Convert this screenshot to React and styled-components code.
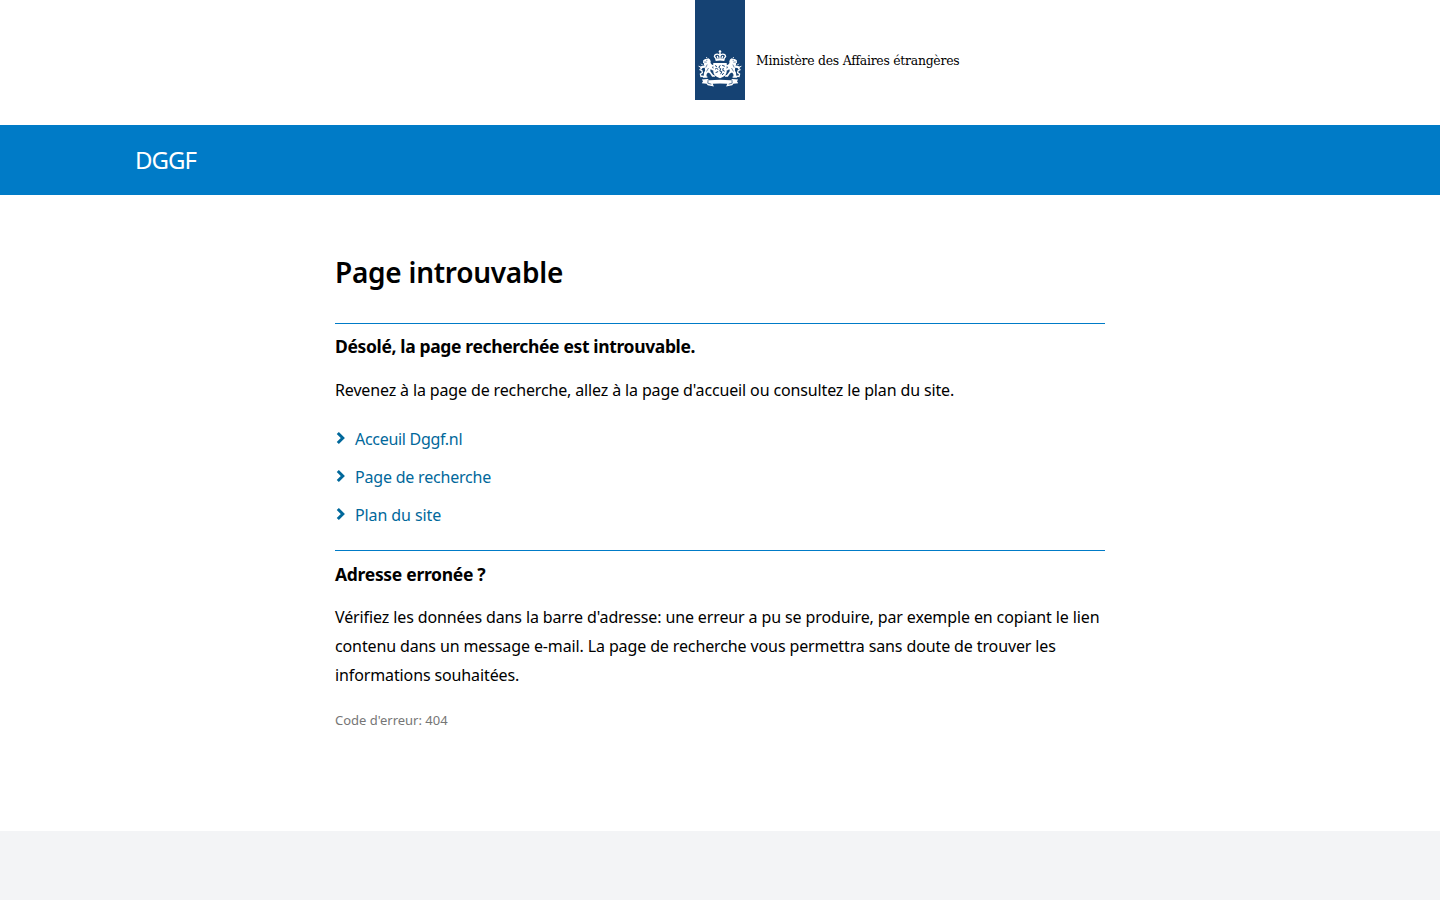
import React from "react";
import styled, { createGlobalStyle } from "styled-components";

const GlobalStyle = createGlobalStyle`
  * { box-sizing: border-box; }
  body {
    margin: 0;
    background: #fff;
    color: #000;
    font: 16px/29px "Noto Sans", "Open Sans", sans-serif;
    font-feature-settings: "liga" 1;
  }
`;

const Page = styled.div`
  min-height: 100vh;
  display: flex;
  flex-direction: column;
`;

const Header = styled.header`
  height: 125px;
  display: flex;
  padding-left: calc(50% - 25px);
`;

const Ribbon = styled.div`
  width: 50px;
  height: 100px;
  padding: 49px 3px 0;
  background: #154273;
`;

const Ministry = styled.span`
  margin: 46px 0 0 11px;
  font: 13.8px/29px "DejaVu Serif Condensed", "DejaVu Serif", serif;
  letter-spacing: -0.25px;
  white-space: nowrap;
`;

const TitleBar = styled.div`
  height: 70px;
  padding-left: 135px;
  background: #007bc7;
  color: #fff;
  font-size: 24px;
  line-height: 70px;
  letter-spacing: -1px;
`;

const Main = styled.main`
  width: 770px;
  height: 636px;
  margin: 0 auto;
  padding-top: 57px;
`;

const Title = styled.h1`
  margin: 0 0 31px;
  font-size: 28px;
  line-height: 40px;
  font-weight: 600;
  letter-spacing: -0.26px;
`;

const Section = styled.section`
  border-top: 1px solid #007bc7;
  padding-top: ${(p) => p.$gap};
`;

const Subtitle = styled.h2`
  margin: 0 0 ${(p) => p.$after};
  font-size: 17.5px;
  line-height: 28px;
  font-weight: 700;
  letter-spacing: ${(p) => p.$tracking};
`;

const Text = styled.p`
  margin: 0;
  letter-spacing: ${(p) => p.$tracking};
`;

const Links = styled.ul`
  list-style: none;
  margin: 20px 0 21px;
  padding: 0;
  display: grid;
  gap: 10px;
`;

const LinkItem = styled.li`
  display: flex;
  align-items: center;
  height: 28px;
`;

const Link = styled.a`
  color: #01689b;
  text-decoration: none;
  line-height: 28px;
  letter-spacing: ${(p) => p.$tracking};
`;

const Chevron = styled.svg`
  width: 20px;
  height: 14px;
  margin-top: -2px;
  fill: none;
  stroke: #01689b;
  stroke-width: 3;
`;

const ErrorCode = styled.p`
  margin: 20px 0 0;
  color: #767676;
  font-size: 13px;
  line-height: 20px;
`;

const Footer = styled.footer`
  flex: 1;
  background: #f3f4f6;
`;

const EmblemSvg = styled.svg`
  display: block;
  width: 44px;
  height: 38px;
`;

function Lion() {
  return (
    <g>
      <path fill="#fff" d="M5.2 11.2l2-1.300 2 .1 1.200-.8 1.600 1.200.7 2-.2 1.600 1.700 2 1.400-.5.4 1.400-2 1.200 1.200 1.700 1.500.2-.4 1.600-2.300-.3-1.200-1.200-.6 2 1.400 1.800 1.500 2.200 1.600.2.4 1.400h-3l-2.100-3.200-2-1-1.300 1.600-.2 2.100 1.100.5-.3 1H4.900l-.3-1.200 1.100-.7.3-3.100 1.100-2.200-.3-2.700-2.300.3-1 1.500-1.500-.6.6-1.100-.9-.7 1.200-1 3.600-.6-.7-1.200.3-1.300-1.100.2z" />
      <path fill="none" stroke="#fff" strokeWidth="1.300" d="M5.500 27.200L3 27.500 2.400 25l2-1.300-.5-2L1.500 20.400" />
      <path fill="none" stroke="#fff" strokeWidth="1" d="M.6 17.200l2.200 1M3.300 14.800l1.500 1.600M8 8.500l1.400.7" />
      <path fill="none" stroke="#154273" strokeWidth=".6" d="M8.200 11.300l1.100.2M6.200 13l2.500.2M9.200 15.500l-1.400 3M10.500 19l-2 3.500" />
    </g>
  );
}

function Emblem() {
  return (
    <EmblemSvg viewBox="0 0 44 38" aria-hidden="true">
      <Lion />
      <g transform="translate(44 0) scale(-1 1)"><Lion /></g>
      <g fill="none" stroke="#fff">
        <path strokeWidth="1.300" d="M22 1v3.500M20.700 2.600h2.600" />
        <path strokeWidth="1.300" d="M18.300 10L16.400 7.500q.2-2.400 3-2.300 2.100.2 2.600 2 .5-1.800 2.600-2 2.800-.1 3 2.300L25.700 10M22 4v6M19.300 7l.9 2.800M24.700 7l-.9 2.800" />
        <path strokeWidth="2" d="M17.500 11q4.500-1 9 0" />
      </g>
      <path fill="#fff" d="M15.300 14h13.400v8.700q-.4 4.500-6.700 6.500-6.300-2-6.700-6.500z" />
      <path fill="none" stroke="#154273" strokeWidth="1" d="M17 16.500l2 1.200M17 20.200l1.500-.8 1.700 1M17.600 23.600l2.500-1M22.300 16.200l-1.500 2.200 1.900 1.300-.9 2.400 2 .6-1.200 2.500M24.200 16.300l2.600 1M25.300 19l-.6 2.300 2 .9M24.200 26l1.400-2" />
      <path fill="#fff" d="M3.800 30.600l5.800-.5 1.700 1.200q10.700-1.100 21.400 0l1.700-1.200 5.800.5-1.200 1.700 1.200 1.900-4.800.5-1.100 1.600-6.200 1.100 1.200-2.600q-7.300-.8-14.600 0l1.200 2.600-6.200-1.100-1.100-1.600-4.800-.5L5 32.300z" />
      <path fill="none" stroke="#154273" strokeWidth=".7" d="M10.100 31l-.3 3.200 3.600 1M33.900 31l.3 3.200-3.600 1" />
    </EmblemSvg>
  );
}

const links = [
  ["Acceuil Dggf.nl", "-0.3px"],
  ["Page de recherche", "-0.2px"],
  ["Plan du site", "-0.1px"],
];

export default function App() {
  return (
    <Page>
      <GlobalStyle />
      <Header>
        <Ribbon><Emblem /></Ribbon>
        <Ministry>Ministère des Affaires étrangères</Ministry>
      </Header>
      <TitleBar>DGGF</TitleBar>
      <Main>
        <Title>Page introuvable</Title>
        <Section $gap="8px">
          <Subtitle $tracking="-0.36px" $after="16px">Désolé, la page recherchée est introuvable.</Subtitle>
          <Text $tracking="-0.14px">Revenez à la page de recherche, allez à la page d'accueil ou consultez le plan du site.</Text>
          <Links>
            {links.map(([label, tracking]) => (
              <LinkItem key={label}>
                <Chevron viewBox="0 0 20 14"><path d="M2.800 2l5 5-5 5" /></Chevron>
                <Link href="#" $tracking={tracking}>{label}</Link>
              </LinkItem>
            ))}
          </Links>
        </Section>
        <Section $gap="9px">
          <Subtitle $tracking="-0.3px" $after="15px">Adresse erronée ?</Subtitle>
          <Text $tracking="-0.12px">
            Vérifiez les données dans la barre d'adresse: une erreur a pu se produire, par exemple en copiant le lien
            contenu dans un message e-mail. La page de recherche vous permettra sans doute de trouver les
            informations souhaitées.
          </Text>
          <ErrorCode>Code d'erreur: 404</ErrorCode>
        </Section>
      </Main>
      <Footer />
    </Page>
  );
}
